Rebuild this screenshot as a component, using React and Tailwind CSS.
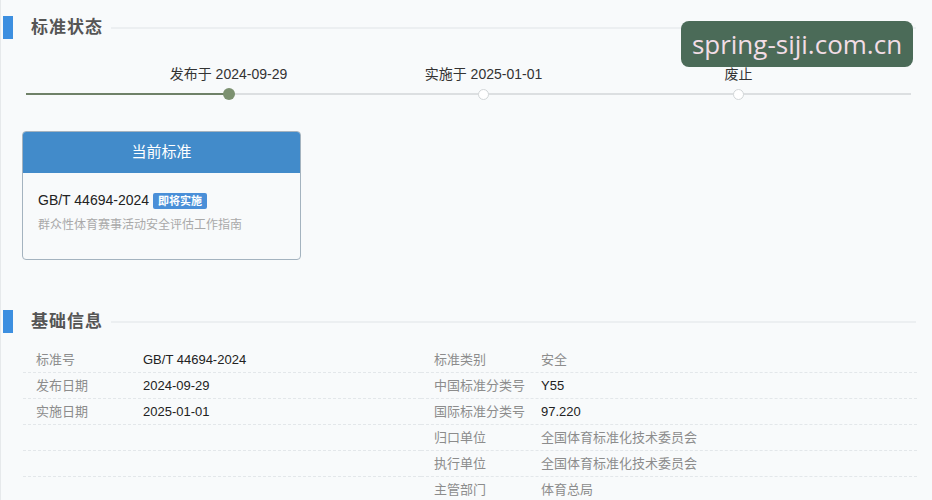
import React from "react";

const sans = { fontFamily: '"Liberation Sans", "Noto Sans CJK SC", sans-serif' };

const milestones = [
  { label: "发布于 2024-09-29", active: true },
  { label: "实施于 2025-01-01", active: false },
  { label: "废止", active: false },
];

const leftRows = [
  { label: "标准号", value: "GB/T 44694-2024", dark: true },
  { label: "发布日期", value: "2024-09-29", dark: true },
  { label: "实施日期", value: "2025-01-01", dark: true },
  { label: "", value: "" },
  { label: "", value: "" },
  { label: "", value: "" },
];

const rightRows = [
  { label: "标准类别", value: "安全" },
  { label: "中国标准分类号", value: "Y55", dark: true },
  { label: "国际标准分类号", value: "97.220", dark: true },
  { label: "归口单位", value: "全国体育标准化技术委员会" },
  { label: "执行单位", value: "全国体育标准化技术委员会" },
  { label: "主管部门", value: "体育总局" },
];

const SectionTitle = ({ title }) => (
  <div className="flex items-center h-[23px]">
    <div className="w-[10px] h-[23px] bg-[#3d8fe0] ml-[2px]" />
    <div className="ml-[18px] text-[17px] font-bold text-[#555] tracking-[1px]">{title}</div>
    <div className="flex-1 h-[2px] bg-[#eceff1] ml-[8px] mr-[16px]" />
  </div>
);

const InfoColumn = ({ rows, labelWidth }) => (
  <div className="flex flex-col">
    {rows.map((row, i) => (
      <div
        key={i}
        className="flex items-center h-[26px] border-b border-dashed border-[#e3e7ea] pl-[13px] text-[13px]"
      >
        <div className={`${labelWidth} text-[#8c8c8c]`}>{row.label}</div>
        <div className={row.dark ? "text-[#222]" : "text-[#8c8c8c]"}>{row.value}</div>
      </div>
    ))}
  </div>
);

export default function App() {
  return (
    <div
      className="relative w-[932px] h-[500px] overflow-hidden bg-[#f8fafb] border-l border-[#e6e9eb]"
      style={sans}
    >
      {/* status */}
      <div className="pt-[16px]">
        <SectionTitle title="标准状态" />
      </div>

      <div className="relative mt-[26px] h-[30px]">
        <div className="absolute left-[25px] right-[21px] top-[28px] h-[2px] bg-[#dcdfe1]" />
        <div className="absolute left-[25px] w-[203px] top-[28px] h-[2px] bg-[#6f8168]" />
        <div className="relative flex pl-[100px]">
          {milestones.map((m) => (
            <div key={m.label} className="w-[255px] flex flex-col items-center">
              <div className="text-[14px] leading-[18px] text-[#333]">{m.label}</div>
              <div
                className={
                  m.active
                    ? "mt-[5px] w-[12px] h-[12px] rounded-full bg-[#7c9170]"
                    : "mt-[6px] w-[11px] h-[11px] rounded-full bg-white border border-[#d2d6d8]"
                }
              />
            </div>
          ))}
        </div>
      </div>

      {/* current standard card */}
      <div className="ml-[21px] mt-[36px] w-[279px] h-[129px] border border-[#a4b3bf] rounded-[4px] overflow-hidden bg-[#f8fafb]">
        <div className="h-[41px] bg-[#428bca] flex items-center justify-center text-white text-[15px]">
          当前标准
        </div>
        <div className="px-[15px] pt-[17px]">
          <div className="flex items-center">
            <span className="text-[14px] text-[#222]">GB/T 44694-2024</span>
            <span className="ml-[4px] px-[5px] h-[16px] leading-[16px] bg-[#4a8fd8] text-white text-[11px] rounded-[2px] font-bold">
              即将实施
            </span>
          </div>
          <div className="mt-[5px] text-[12px] text-[#a9a9a9]">群众性体育赛事活动安全评估工作指南</div>
        </div>
      </div>

      {/* basic info */}
      <div className="mt-[50px]">
        <SectionTitle title="基础信息" />
      </div>

      <div className="grid grid-cols-[398px_496px] ml-[22px] mt-[14px]">
        <InfoColumn rows={leftRows} labelWidth="w-[107px]" />
        <InfoColumn rows={rightRows} labelWidth="w-[107px]" />
      </div>

      {/* site watermark */}
      <div
        className="absolute left-[680px] top-[21px] w-[232px] h-[46px] rounded-[8px] bg-[#4b6b58] flex items-center justify-center text-[#f2dde6] text-[26px]"
        style={{ fontFamily: '"Open Sans", sans-serif' }}
      >
        spring-siji.com.cn
      </div>
    </div>
  );
}
